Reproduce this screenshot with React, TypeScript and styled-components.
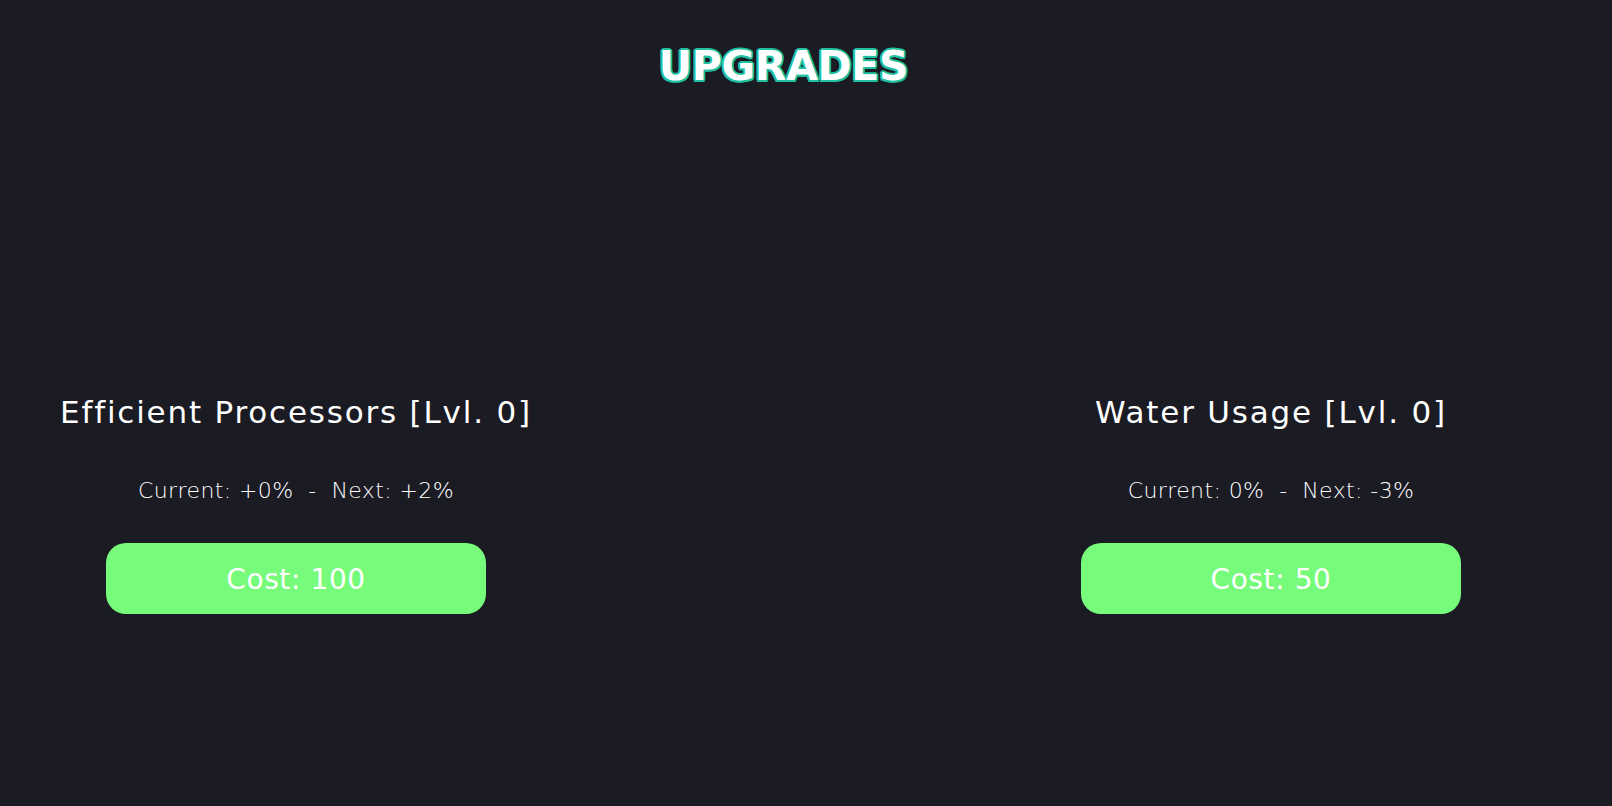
import React from 'react';
import styled, { createGlobalStyle } from 'styled-components';

interface UpgradeInterface {
  name: string;
  level: number;
  current: string;
  next: string;
  cost: number;
}

const upgrades: UpgradeInterface[] = [
  { name: 'Efficient Processors', level: 0, current: '+0%', next: '+2%', cost: 100 },
  { name: 'Water Usage', level: 0, current: '0%', next: '-3%', cost: 50 }
];

const GlobalStyle = createGlobalStyle`
  html, body {
    margin: 0;
    background: #1b1b24;
  }
  body {
    font-family: "DejaVu Sans", "Liberation Sans", sans-serif;
    color: #fff;
  }
`;

const Page = styled.div`
  width: 1567px;
  min-height: 806px;
  padding-top: 40px;
  box-sizing: border-box;
`;

const Title = styled.h1`
  margin: 0;
  font-size: 41px;
  line-height: 52px;
  font-weight: 700;
  letter-spacing: -0.3px;
  text-align: center;
  color: #fff;
  text-shadow:
    2px 0 0 #1fbf9f, -2px 0 0 #1fbf9f, 0 2px 0 #1fbf9f, 0 -2px 0 #1fbf9f,
    1.5px 1.5px 0 #1fbf9f, -1.5px 1.5px 0 #1fbf9f, 1.5px -1.5px 0 #1fbf9f, -1.5px -1.5px 0 #1fbf9f;
`;

const Grid = styled.div`
  display: grid;
  grid-template-columns: 592px 383px 592px;
  margin-top: 302px;
`;

const Card = styled.div<{ $column: number }>`
  grid-column: ${({ $column }) => $column};
  display: flex;
  flex-direction: column;
  align-items: center;
`;

const Name = styled.div`
  font-size: 31px;
  line-height: 36px;
  letter-spacing: 1.8px;
  white-space: nowrap;
`;

const Stats = styled.div`
  margin-top: 47px;
  font-size: 22px;
  line-height: 28px;
  font-weight: 300;
  letter-spacing: 0.4px;
  white-space: pre;
`;

const CostButton = styled.button`
  margin-top: 38px;
  width: 380px;
  height: 71px;
  border: none;
  border-radius: 20px;
  background: #77fb7b;
  color: #fff;
  font-family: inherit;
  font-size: 28px;
  letter-spacing: 0.6px;
  padding-top: 3px;
  cursor: pointer;
`;

const App: React.FC = () => (
  <Page>
    <GlobalStyle />
    <Title>UPGRADES</Title>
    <Grid>
      {upgrades.map((upgrade, index) => (
        <Card key={upgrade.name} $column={index * 2 + 1}>
          <Name>{upgrade.name} [Lvl. {upgrade.level}]</Name>
          <Stats>{`Current: ${upgrade.current}  -  Next: ${upgrade.next}`}</Stats>
          <CostButton>Cost: {upgrade.cost}</CostButton>
        </Card>
      ))}
    </Grid>
  </Page>
);

export default App;
